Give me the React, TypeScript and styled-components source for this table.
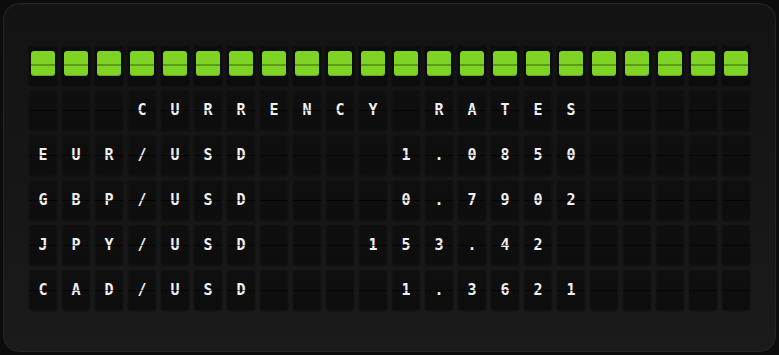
import * as React from 'react';
import styled, { createGlobalStyle } from 'styled-components';

const GlobalStyle = createGlobalStyle`
    html, body {
        margin: 0;
        padding: 0;
        background: #0c0c0c;
    }
`;

const COLS = 22;

const rows = [
    '   CURRENCY RATES',
    'EUR/USD    1.0850',
    'GBP/USD    0.7902',
    'JPY/USD   153.42',
    'CAD/USD    1.3621',
];

const Page = styled.div`
    width: 779px;
    height: 355px;
    padding: 3px;
    box-sizing: border-box;
`;

const Board = styled.div`
    height: 100%;
    box-sizing: border-box;
    border: 1px solid #242424;
    border-radius: 16px;
    background: linear-gradient(180deg, #131313 0%, #171717 60%, #1b1b1b 100%);
    box-shadow: inset 0 1px 0 rgba(255, 255, 255, 0.03);
    display: flex;
    align-items: center;
    justify-content: center;
`;

const Grid = styled.div`
    display: grid;
    grid-template-columns: repeat(${COLS}, 28px);
    grid-auto-rows: 40px;
    gap: 5px;
`;

const Flap = styled.div`
    position: relative;
    border-radius: 3px;
    background: linear-gradient(180deg, #0f0f0f 0%, #0d0d0d 100%);
    box-shadow: 0 1px 2px rgba(0, 0, 0, 0.45), inset 0 0 0 1px rgba(255, 255, 255, 0.015);
    display: flex;
    align-items: center;
    justify-content: center;
    font-family: 'DejaVu Sans Mono', 'Liberation Mono', monospace;
    font-size: 15px;
    font-weight: bold;
    color: #f0f0f0;

    &::after {
        content: '';
        position: absolute;
        left: 0;
        right: 0;
        top: 50%;
        height: 1px;
        background: rgba(0, 0, 0, 0.55);
    }
`;

const LampCell = styled.div`
    border-radius: 3px;
    background: #0c0c0c;
    box-shadow: 0 1px 2px rgba(0, 0, 0, 0.5), inset 0 1px 0 rgba(255, 255, 255, 0.03);
    padding: 6px 2px 9px;
    display: flex;
`;

const Lamp = styled.div`
    position: relative;
    flex: 1;
    border-radius: 3px;
    background: #7fd325;
    box-shadow: inset 0 -1px 0 rgba(0, 0, 0, 0.2);

    &::after {
        content: '';
        position: absolute;
        left: 0;
        right: 0;
        top: 13px;
        height: 2px;
        background: #5a9c17;
    }
`;

export default function App() {
    return (
        <Page>
            <GlobalStyle />
            <Board>
                <Grid>
                    {Array.from({ length: COLS }, (_, i) => (
                        <LampCell key={`l${i}`}>
                            <Lamp />
                        </LampCell>
                    ))}
                    {rows.map((row, r) =>
                        row
                            .padEnd(COLS, ' ')
                            .split('')
                            .map((ch, c) => <Flap key={`${r}-${c}`}>{ch.trim()}</Flap>)
                    )}
                </Grid>
            </Board>
        </Page>
    );
}
